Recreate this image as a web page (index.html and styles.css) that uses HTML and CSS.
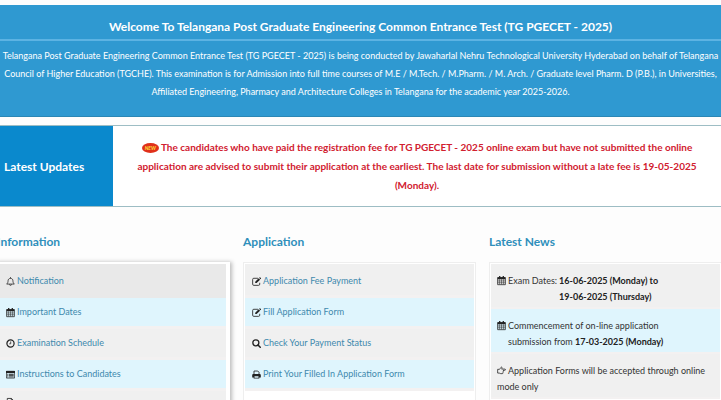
FILE: index.html
```html
<!DOCTYPE html>
<html lang="en">
<head>
  <meta charset="UTF-8">
  <meta name="viewport" content="width=device-width, initial-scale=1">
  <title>TG PGECET - 2025</title>
  <link rel="stylesheet" href="styles.css">
</head>
<body>
  <!-- Shared icons -->
  <svg class="sprite" aria-hidden="true">
    <symbol id="bell" viewBox="0 0 14 14">
      <path d="M7 .2v2M1 11h12c-1.600-1.400-2.200-3-2.200-5 0-2.300-1.500-3.900-3.800-3.900S3.200 3.700 3.200 6c0 2-.6 3.600-2.200 5zM5.500 11.500a1.500 1.500 0 0 0 3 0" fill="none" stroke="currentColor" stroke-width="1.200" stroke-linejoin="round"/>
    </symbol>
    <symbol id="calendar" viewBox="0 0 14 14">
      <path d="M1 2.500h12V13.500H1z" fill="none" stroke="currentColor" stroke-width="1.200"/>
      <path d="M1 2h12v3H1zM3.200 0h2v3.500h-2zM8.800 0h2v3.500h-2z" fill="currentColor"/>
      <path d="M4 5v8M7 5v8M10 5v8M1 7.700h12M1 10.500h12" stroke="currentColor" stroke-width=".8"/>
    </symbol>
    <symbol id="clock" viewBox="0 0 14 14">
      <circle cx="7" cy="7" r="5.600" fill="none" stroke="currentColor" stroke-width="1.900"/>
      <path d="M7.300 3.800v3.700H5" fill="none" stroke="currentColor" stroke-width="1.200"/>
    </symbol>
    <symbol id="list" viewBox="0 0 14 14">
      <path d="M.6 2h12.800v10.500H.6z" fill="none" stroke="currentColor" stroke-width="1.200"/>
      <path d="M0 1.400h14v3.200H0zM2 6h1.500v1.200H2zM2 8h1.500v1.200H2zM2 10h1.500v1.200H2zM4.500 6H12v1.200H4.500zM4.500 8H12v1.200H4.500zM4.500 10H12v1.200H4.500z" fill="currentColor"/>
    </symbol>
    <symbol id="file" viewBox="0 0 14 14">
      <path d="M2 .7h6.500L12 4.200v9.100H2zM8.300.7v3.700H12" fill="none" stroke="currentColor" stroke-width="1.300"/>
    </symbol>
    <symbol id="edit" viewBox="0 0 14 14">
      <path d="M9.300 2H2.800Q1 2 1 3.800v7.400Q1 13 2.800 13h7.400q1.800 0 1.800-1.800V9" fill="none" stroke="currentColor" stroke-width="1.300"/>
      <path d="M5 7.300 10.400 1.900l2.200 2.200L7.200 9.500H5zM11 1.300l.7-.7q.6-.5 1.200 0l1 1q.5.600 0 1.200l-.7.7z" fill="currentColor"/>
    </symbol>
    <symbol id="search" viewBox="0 0 14 14">
      <circle cx="6" cy="6" r="4.700" fill="none" stroke="currentColor" stroke-width="2"/>
      <path d="m9.300 9.300 3.500 3.500" stroke="currentColor" stroke-width="2.400" stroke-linecap="round"/>
    </symbol>
    <symbol id="print" viewBox="0 0 14 14">
      <path d="M3.100 7V1.600h5.900l1.900 1.900V7" fill="none" stroke="currentColor" stroke-width="1.300"/>
      <path d="M2 6.200h10q1.700 0 1.700 1.700v3.600h-2.300v1.900H2.600v-1.900H.3V7.900Q.3 6.200 2 6.200zM3.900 9.900v2.300h6.200V9.900z" fill="currentColor" fill-rule="evenodd"/>
    </symbol>
    <symbol id="hand" viewBox="0 0 14 14">
      <path d="M1 5.200h2.500c1.400-.4 1.800-1.700 2.700-3.100.5-.8 1.700-.4 1.700.7 0 .8-.5 1.300-.7 2h5c1.300 0 1.300 1.900 0 1.900H9.400c1 .4.900 1.700 0 1.900.7.500.5 1.500-.2 1.700.4.800-.1 1.600-1 1.600H5.800L3.500 11H1z" fill="none" stroke="currentColor" stroke-width="1.200" stroke-linejoin="round"/>
    </symbol>
  </svg>

  <!-- Welcome banner -->
  <header class="banner">
    <h1>Welcome To Telangana Post Graduate Engineering Common Entrance Test (TG PGECET - 2025)</h1>
    <p>Telangana Post Graduate Engineering Common Entrance Test (TG PGECET - 2025) is being conducted by Jawaharlal Nehru Technological University Hyderabad on behalf of Telangana<br>
      Council of Higher Education (TGCHE). This examination is for Admission into full time courses of M.E / M.Tech. / M.Pharm. / M. Arch. / Graduate level Pharm. D (P.B.), in Universities,<br>
      Affiliated Engineering, Pharmacy and Architecture Colleges in Telangana for the academic year 2025-2026.</p>
  </header>

  <!-- Latest updates -->
  <section class="updates">
    <h2>Latest Updates</h2>
    <p><span class="new">NEW</span> The candidates who have paid the registration fee for TG PGECET - 2025 online exam but have not submitted the online<br>
      application are advised to submit their application at the earliest. The last date for submission without a late fee is 19-05-2025<br>
      (Monday).</p>
  </section>

  <!-- Three link columns -->
  <main class="columns">
    <section>
      <h2>Information</h2>
      <ul class="panel raised">
        <li class="current"><svg class="icon"><use href="#bell"/></svg><a href="#">Notification</a></li>
        <li><svg class="icon"><use href="#calendar"/></svg><a href="#">Important Dates</a></li>
        <li><svg class="icon"><use href="#clock"/></svg><a href="#">Examination Schedule</a></li>
        <li><svg class="icon"><use href="#list"/></svg><a href="#">Instructions to Candidates</a></li>
        <li><svg class="icon"><use href="#file"/></svg></li>
      </ul>
    </section>
    <section>
      <h2>Application</h2>
      <ul class="panel">
        <li><svg class="icon"><use href="#edit"/></svg><a href="#">Application Fee Payment</a></li>
        <li><svg class="icon"><use href="#edit"/></svg><a href="#">Fill Application Form</a></li>
        <li><svg class="icon"><use href="#search"/></svg><a href="#">Check Your Payment Status</a></li>
        <li><svg class="icon"><use href="#print"/></svg><a href="#">Print Your Filled In Application Form</a></li>
      </ul>
    </section>
    <section>
      <h2>Latest News</h2>
      <ul class="panel news">
        <li><svg class="icon"><use href="#calendar"/></svg><span>Exam Dates:</span><b>16-06-2025 (Monday) to<br>19-06-2025 (Thursday)</b></li>
        <li><svg class="icon"><use href="#calendar"/></svg><span>Commencement of on-line application<br>submission from <b>17-03-2025 (Monday)</b></span></li>
        <li class="wrap"><svg class="icon"><use href="#hand"/></svg> Application Forms will be accepted through online<br>mode only</li>
      </ul>
    </section>
  </main>
</body>
</html>
```
FILE: styles.css
```css
/* Base */
body {
  margin: 0;
  padding-top: 5px;
  height: 100vh;
  box-sizing: border-box;
  overflow: hidden;
  background: #fdfdfd;
  font-family: Lato, "Open Sans", sans-serif;
  font-size: 9px;
  color: #333;
}
h1, h2, p, ul {
  margin: 0;
  padding: 0;
}
.sprite {
  display: none;
}

/* Welcome banner */
.banner {
  background: #2f99d1;
  border-bottom: 1px solid #2b87b5;
  color: #fff;
  text-align: center;
  white-space: nowrap;
  padding-bottom: 15px;
}
.banner h1 {
  font-size: 12px;
  line-height: 20px;
  padding: 12px 0 2px;
  border-bottom: 2px solid #5cb3e3;
}
.banner p {
  margin-top: 6px;
  line-height: 18px;
}

/* Latest updates */
.updates {
  display: flex;
  margin-top: 8px;
  border: solid #9dbdc4;
  border-width: 1px 0;
  background: #fff;
}
.updates h2 {
  flex: 0 0 109px;
  padding-left: 4px;
  display: flex;
  align-items: center;
  background: #0a89cd;
  color: #fff;
  font-size: 12px;
  font-weight: 700;
}
.updates p {
  flex: 1;
  padding: 12px 0 11px;
  line-height: 19px;
  font-size: 10px;
  font-weight: 700;
  color: #d1202f;
  text-align: center;
  white-space: nowrap;
}
.new {
  display: inline-block;
  padding: 0 3px;
  border-radius: 50%;
  background: #e0301a;
  color: #ffe23c;
  font-size: 5px;
  font-style: italic;
  line-height: 10px;
  vertical-align: middle;
}

/* Columns */
.columns {
  display: grid;
  grid-template-columns: repeat(3, minmax(0, 1fr));
  gap: 13px;
  margin: 23px -1px 0 -3px;
}
.columns h2 {
  font-size: 12px;
  font-weight: 700;
  line-height: 24px;
  color: #2f8fbb;
}
.panel {
  list-style: none;
  margin-top: 8px;
  border: 1px solid #eee;
  background: #fff;
  padding: 1px 1px 20px;
}
.raised {
  border-color: #fff;
  box-shadow: 1px 1px 4px 1px #bbb;
  padding-right: 3px;
}
.panel li {
  display: flex;
  align-items: center;
  gap: 2px;
  padding: 6px 7px;
  line-height: 16px;
  background: #f0f0f0;
  border-bottom: 3px solid #f3f1f1;
}
.panel li:first-child {
  padding-top: 9px;
}
.panel li:nth-child(even) {
  background: #dff5fd;
}
.panel .current {
  background: #e9e9e9;
  border-color: #e9e9e9;
}
.panel a {
  color: #4089ad;
  text-decoration: none;
}
.icon {
  flex: none;
  width: 9px;
  height: 11px;
  color: #222;
}

/* News */
.panel.news li {
  align-items: flex-start;
  padding: 9px 6px 2px;
  border-bottom-width: 2px;
  white-space: nowrap;
}
.news .icon {
  margin-top: 2px;
}
.news b {
  color: #222;
}
.panel.news .wrap {
  display: block;
}
.news .wrap .icon {
  vertical-align: -2px;
}
```
